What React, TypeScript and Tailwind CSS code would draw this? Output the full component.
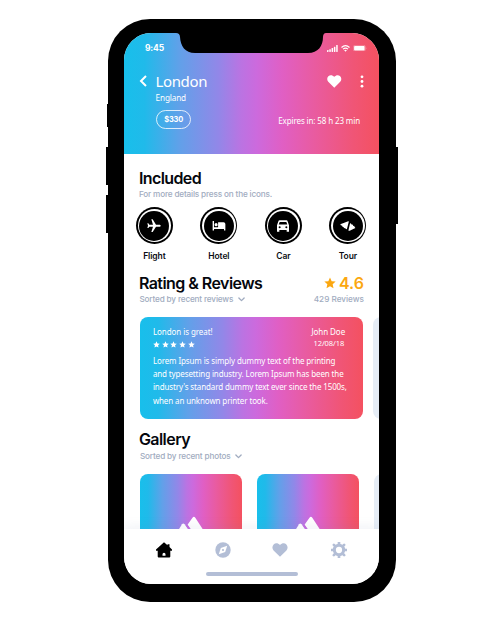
import React from "react";

const GRAD =
  "bg-[linear-gradient(90deg,#18bfeb_0%,#20baea_8%,#62a0e9_22%,#9287e8_37%,#bb73e2_46%,#cc6add_52%,#e05fc4_62%,#e95b9f_75%,#f05576_90%,#f45160_100%)]";
const SEG = "font-['Noto_Sans','Open_Sans',sans-serif]";

function Star({ className }: { className: string }) {
  return (
    <svg viewBox="0 0 24 24" className={className} fill="currentColor">
      <path d="M12 1l3.3 7.400 8 .8-6 5.400 1.700 8L12 18.500l-7 4.100 1.700-8-6-5.400 8-.8z" />
    </svg>
  );
}

function Heart({ className }: { className: string }) {
  return (
    <svg viewBox="0 0 24 22" className={className} fill="currentColor">
      <path d="M12 21.500L1.900 11.600C-.6 9 -.5 4.700 2 2.200c2.700-2.600 7-2.300 10 .9 3-3.200 7.300-3.500 10-.9 2.500 2.500 2.600 6.800.1 9.400z" />
    </svg>
  );
}

function Chevron() {
  return (
    <svg viewBox="0 0 8 5" className="ml-[4.500px] h-[5px] w-[7px]" fill="none" stroke="#a1acc0" strokeWidth="1.500">
      <path d="M1 .8l3 3 3-3" strokeLinecap="round" strokeLinejoin="round" />
    </svg>
  );
}

function Included({ label, children }: { label: string; children: React.ReactNode }) {
  return (
    <div className="flex w-[38px] flex-col items-center">
      <div className="flex size-[37px] items-center justify-center rounded-full bg-black">
        <div className="flex size-[33.500px] items-center justify-center rounded-full bg-white">
          <div className="flex size-[30px] items-center justify-center rounded-full bg-black text-white">{children}</div>
        </div>
      </div>
      <div className="mt-[6px] h-3 text-[8.500px] leading-3 font-semibold tracking-[-0.1px] whitespace-nowrap text-[#0b0d14]">
        {label}
      </div>
    </div>
  );
}

function Photo() {
  return (
    <div className={`flex h-[90px] w-[102.500px] shrink-0 justify-center rounded-[8px] ${GRAD}`}>
      <svg viewBox="0 0 44 40" className="mt-[41.500px] h-[40px] w-[44px]" fill="#fff">
        <path d="M0 29L13 8.300q1.300-1.800 2.600 0L30 29z" />
        <path d="M18.500 8.800L23.500 1.700q1.400-2 2.800 0L44 29H32z" />
        <path d="M17.500 8.800L25 19" stroke="#c56ce0" strokeWidth="1.800" />
      </svg>
    </div>
  );
}

export default function App() {
  return (
    <div className="flex h-[624px] w-[489px] overflow-hidden bg-white pt-[19px] font-['Inter',sans-serif]">
      <div className="relative ml-[108px] h-[582.500px] w-[288px] shrink-0 rounded-[42px] bg-black pt-[14px] pl-[16.400px]">
        <div className="absolute top-[85px] -left-[1px] h-[23px] w-[4px] bg-black" />
        <div className="absolute top-[128px] -left-[2px] h-[38px] w-[4px] bg-black" />
        <div className="absolute top-[176px] -left-[2px] h-[38px] w-[4px] bg-black" />
        <div className="absolute top-[128px] -right-[2px] h-[77px] w-[4px] bg-black" />

        <div className="relative flex h-[551px] w-[254.600px] flex-col overflow-hidden rounded-[27px] bg-white">
          <svg viewBox="0 0 150 20" className="absolute top-0 left-[51.500px] h-[20px] w-[150px]">
            <path d="M0 0Q3.800.2 4 4C4.500 13 9 20 19 20H132C142 20 147 13 147 4Q147.200.2 150 0z" fill="#000" />
          </svg>

          <header className={`h-[121px] shrink-0 text-white ${GRAD}`}>
            <div className="flex h-[30px] items-center pr-[12px] pl-[20.500px]">
              <span className="text-[8.500px] font-bold tracking-[-0.1px]">9:45</span>
              <div className="ml-auto flex items-center">
                <svg viewBox="0 0 11 7" className="h-[7px] w-[11px]" fill="#fff">
                  <rect x="0" y="5" width="1.500" height="2" rx=".4" />
                  <rect x="2.300" y="4.200" width="1.500" height="2.800" rx=".4" />
                  <rect x="4.600" y="3" width="1.500" height="4" rx=".4" />
                  <rect x="6.900" y="1.700" width="1.500" height="5.300" rx=".4" />
                  <rect x="9.200" y="0" width="1.500" height="7" rx=".4" />
                </svg>
                <svg viewBox="0 0 18 14" className="ml-[3px] h-[7px] w-[9px]" fill="none" stroke="#fff" strokeWidth="2.200">
                  <path d="M1 5Q9-2.500 17 5M4 8.300Q9 4 14 8.300" />
                  <path d="M6.300 10.500Q9 8.500 11.700 10.500L9 13.500z" fill="#fff" stroke="none" />
                </svg>
                <svg viewBox="0 0 28 13" className="ml-[3px] h-[6.500px] w-[14px]">
                  <rect x=".7" y=".7" width="24" height="11.600" rx="3" fill="none" stroke="#fff" strokeOpacity=".5" />
                  <rect x="2.200" y="2" width="21" height="9" rx="1.500" fill="#fff" />
                  <path d="M26 4.500q1.500 2 0 4z" fill="#fff" opacity=".5" />
                </svg>
              </div>
            </div>
            <div className={`flex h-[26px] items-start pt-[8px] pl-[14.500px] ${SEG}`}>
              <svg viewBox="0 0 8 12" className="mt-[4px] h-[12px] w-[8px]" fill="none" stroke="#fff" strokeWidth="2">
                <path d="M7 1L2 6l5 5" />
              </svg>
              <span className="ml-[8.500px] text-[15px] leading-[20px] tracking-[-0.350px]">London</span>
              <Heart className="mt-[4px] ml-auto h-[13px] w-[14.500px]" />
              <svg viewBox="0 0 4 14" className="mt-[4px] mr-[15px] ml-[18px] h-[13px] w-[4px]" fill="#fff">
                <circle cx="2" cy="2" r="1.500" />
                <circle cx="2" cy="7" r="1.500" />
                <circle cx="2" cy="12" r="1.500" />
              </svg>
            </div>
            <div className={`mt-[3px] pl-[31.200px] text-[8.200px] leading-[12px] tracking-[-0.150px] ${SEG}`}>England</div>
            <div className="mt-[6px] flex h-[20px] items-start justify-between pr-[19px] pl-[31.800px]">
              <div className="flex h-[19px] w-[35px] items-center justify-center rounded-full border border-white/80 text-[7.400px] font-bold tracking-[-0.150px]">
                $330
              </div>
              <span className={`mt-[5px] text-[8px] leading-[12px] tracking-[-0.120px] ${SEG}`}>Expires in: 58 h 23 min</span>
            </div>
          </header>

          <main className="h-[375px] shrink-0 overflow-hidden pl-[14.500px]">
            <h2 className="mt-[15px] h-[19px] text-[16px] leading-[19px] font-semibold tracking-[-0.600px] text-[#05070d]">Included</h2>
            <p className="h-3 text-[8.200px] leading-3 font-medium tracking-[-0.170px] text-[#a1acc0]">For more details press on the icons.</p>
            <div className="mt-[7px] -ml-[3.500px] flex h-[55px] w-[231.500px] justify-between">
              <Included label="Flight">
                <svg viewBox="0 0 24 24" className="size-[16px] rotate-90" fill="currentColor">
                  <path d="M21 16v-2l-8-5V3.500a1.500 1.500 0 0 0-3 0V9l-8 5v2l8-2.500V19l-2 1.500V22l3.500-1 3.500 1v-1.500L13 19v-5.500z" />
                </svg>
              </Included>
              <Included label="Hotel">
                <svg viewBox="0 0 14 11" className="h-[10px] w-[14px]">
                  <path d="M0 0h1.500v7H6V1.300h6q2 0 2 2V10.500h-1.500V8.700h-11v1.800H0z" fill="#fff" />
                  <circle cx="3.800" cy="4" r="1.700" fill="#fff" />
                </svg>
              </Included>
              <Included label="Car">
                <svg viewBox="0 0 24 24" className="size-[16px]" fill="currentColor">
                  <path
                    d="M18.900 4.800c-.2-.7-.8-1.300-1.700-1.300H6.800c-.9 0-1.500.6-1.700 1.300L3 11v9.500h3.500V18h11v2.500H21V11zM7 15.500a1.500 1.500 0 1 1 0-3 1.500 1.500 0 0 1 0 3zm10 0a1.500 1.500 0 1 1 0-3 1.500 1.500 0 0 1 0 3zM5.600 9.800L7 6h10l1.400 3.800z"
                    fillRule="evenodd"
                  />
                </svg>
              </Included>
              <Included label="Tour">
                <svg viewBox="0 0 16 12" className="h-[12px] w-[16px]" fill="currentColor">
                  <path d="M.3 4.300L8.200 1.200q.7-.2.600.5L7 8.700q-.2.800-.9.300L4.800 7.900l-.7.400-.6-1.400-.8.200-.7-1.500H1z" />
                  <path d="M10 3.600q.3-.7.900-.1l1 1.300.8-.2.500 1.300.9-.1.500 1.300.8.800-5.700 2.800q-.9.300-1.300-.3z" />
                </svg>
              </Included>
            </div>
            <div className="mt-[11px] flex h-[20px] items-center pr-[15px]">
              <h2 className="text-[16px] leading-[20px] font-semibold tracking-[-0.550px] text-[#05070d]">Rating &amp; Reviews</h2>
              <Star className="ml-auto size-[12px] text-[#fba710]" />
              <span className="ml-[3px] text-[16px] leading-[20px] font-semibold text-[#fba710]">4.6</span>
            </div>
            <div className="flex h-[13px] items-center pr-[15px] pl-[.5px] text-[8.200px] font-medium text-[#a1acc0]">
              <span className="tracking-[-0.160px]">Sorted by recent reviews</span>
              <Chevron />
              <span className="ml-auto">429 Reviews</span>
            </div>
            <div className="mt-[11px] ml-[.7px] flex h-[102px] gap-[10.500px]">
              <div className={`h-[102px] w-[223px] shrink-0 rounded-[8px] pt-[9px] pr-[17.500px] pl-[13.300px] text-white ${GRAD} ${SEG}`}>
                <div className="flex h-[12px] justify-between text-[8px] leading-[12px] tracking-[-0.070px]">
                  <span>London is great!</span>
                  <span>John Doe</span>
                </div>
                <div className="flex h-[12px] items-center justify-between text-[7.500px] tracking-[-0.1px]">
                  <div className="flex gap-[1.700px]">
                    <Star className="size-[7px]" />
                    <Star className="size-[7px]" />
                    <Star className="size-[7px]" />
                    <Star className="size-[7px]" />
                    <Star className="size-[7px]" />
                  </div>
                  <span className="mr-[1px]">12/08/18</span>
                </div>
                <div className="mt-[4px] text-[8px] leading-[13.200px] tracking-[-0.120px] whitespace-nowrap">
                  Lorem Ipsum is simply dummy text of the printing
                  <br />
                  and typesetting industry. Lorem Ipsum has been the
                  <br />
                  industry's standard dummy text ever since the 1500s,
                  <br />
                  when an unknown printer took.
                </div>
              </div>
              <div className="h-[102px] w-[60px] shrink-0 rounded-[8px] bg-[#e6edf6]" />
            </div>
            <h2 className="mt-[10px] h-[20px] text-[16px] leading-[20px] font-semibold tracking-[-0.550px] text-[#05070d]">Gallery</h2>
            <div className="mt-[1px] flex h-[13px] items-center pl-[1px] text-[8.200px] font-medium tracking-[-0.160px] text-[#a1acc0]">
              <span>Sorted by recent photos</span>
              <Chevron />
            </div>
            <div className="mt-[11px] ml-[.7px] flex gap-[14.500px]">
              <Photo />
              <Photo />
              <div className="h-[90px] w-[60px] shrink-0 rounded-[8px] bg-[#e6edf6]" />
            </div>
          </main>

          <nav className="relative flex h-[55px] flex-col items-center bg-white shadow-[0_-3px_10px_rgba(120,140,180,0.1)]">
            <div className="flex h-[42px] w-full items-center pl-[31.200px] text-[#b3bed6]">
              <svg viewBox="0 0 16 16" className="size-[16px]" fill="#000">
                <path
                  d="M8 .3L11.500 3.300V2.300h2v2.800L16 7.400v1.400h-1.700V14.500q0 1-1 1H2.700q-1 0-1-1V8.800H0V7.400zM6.500 13.800h3v-1.500a1.500 1.500 0 0 0-3 0z"
                  fillRule="evenodd"
                />
              </svg>
              <svg viewBox="0 0 16 16" className="ml-[43.500px] size-[16px]" fill="currentColor">
                <circle cx="8" cy="8" r="7.700" />
                <path d="M12.200 3.800L10.200 10 3.800 12.200 5.800 6z" fill="#fff" />
                <circle cx="8" cy="8" r="1.100" />
              </svg>
              <Heart className="ml-[41px] h-[14px] w-[16px]" />
              <svg viewBox="0 0 24 24" className="ml-[43px] size-[16px]">
                <circle cx="12" cy="12" r="7" fill="none" stroke="currentColor" strokeWidth="4.600" />
                <path
                  d="M12 .8V4M12 20v3.200M.8 12H4M20 12h3.200M4.300 4.300l2 2M17.700 17.700l2 2M19.700 4.300l-2 2M6.300 17.700l-2 2"
                  stroke="currentColor"
                  strokeWidth="4"
                  strokeLinecap="round"
                />
              </svg>
            </div>
            <div className="mt-[1px] h-[3.500px] w-[92px] rounded-full bg-[#b3bed6]" />
          </nav>
        </div>
      </div>
    </div>
  );
}
